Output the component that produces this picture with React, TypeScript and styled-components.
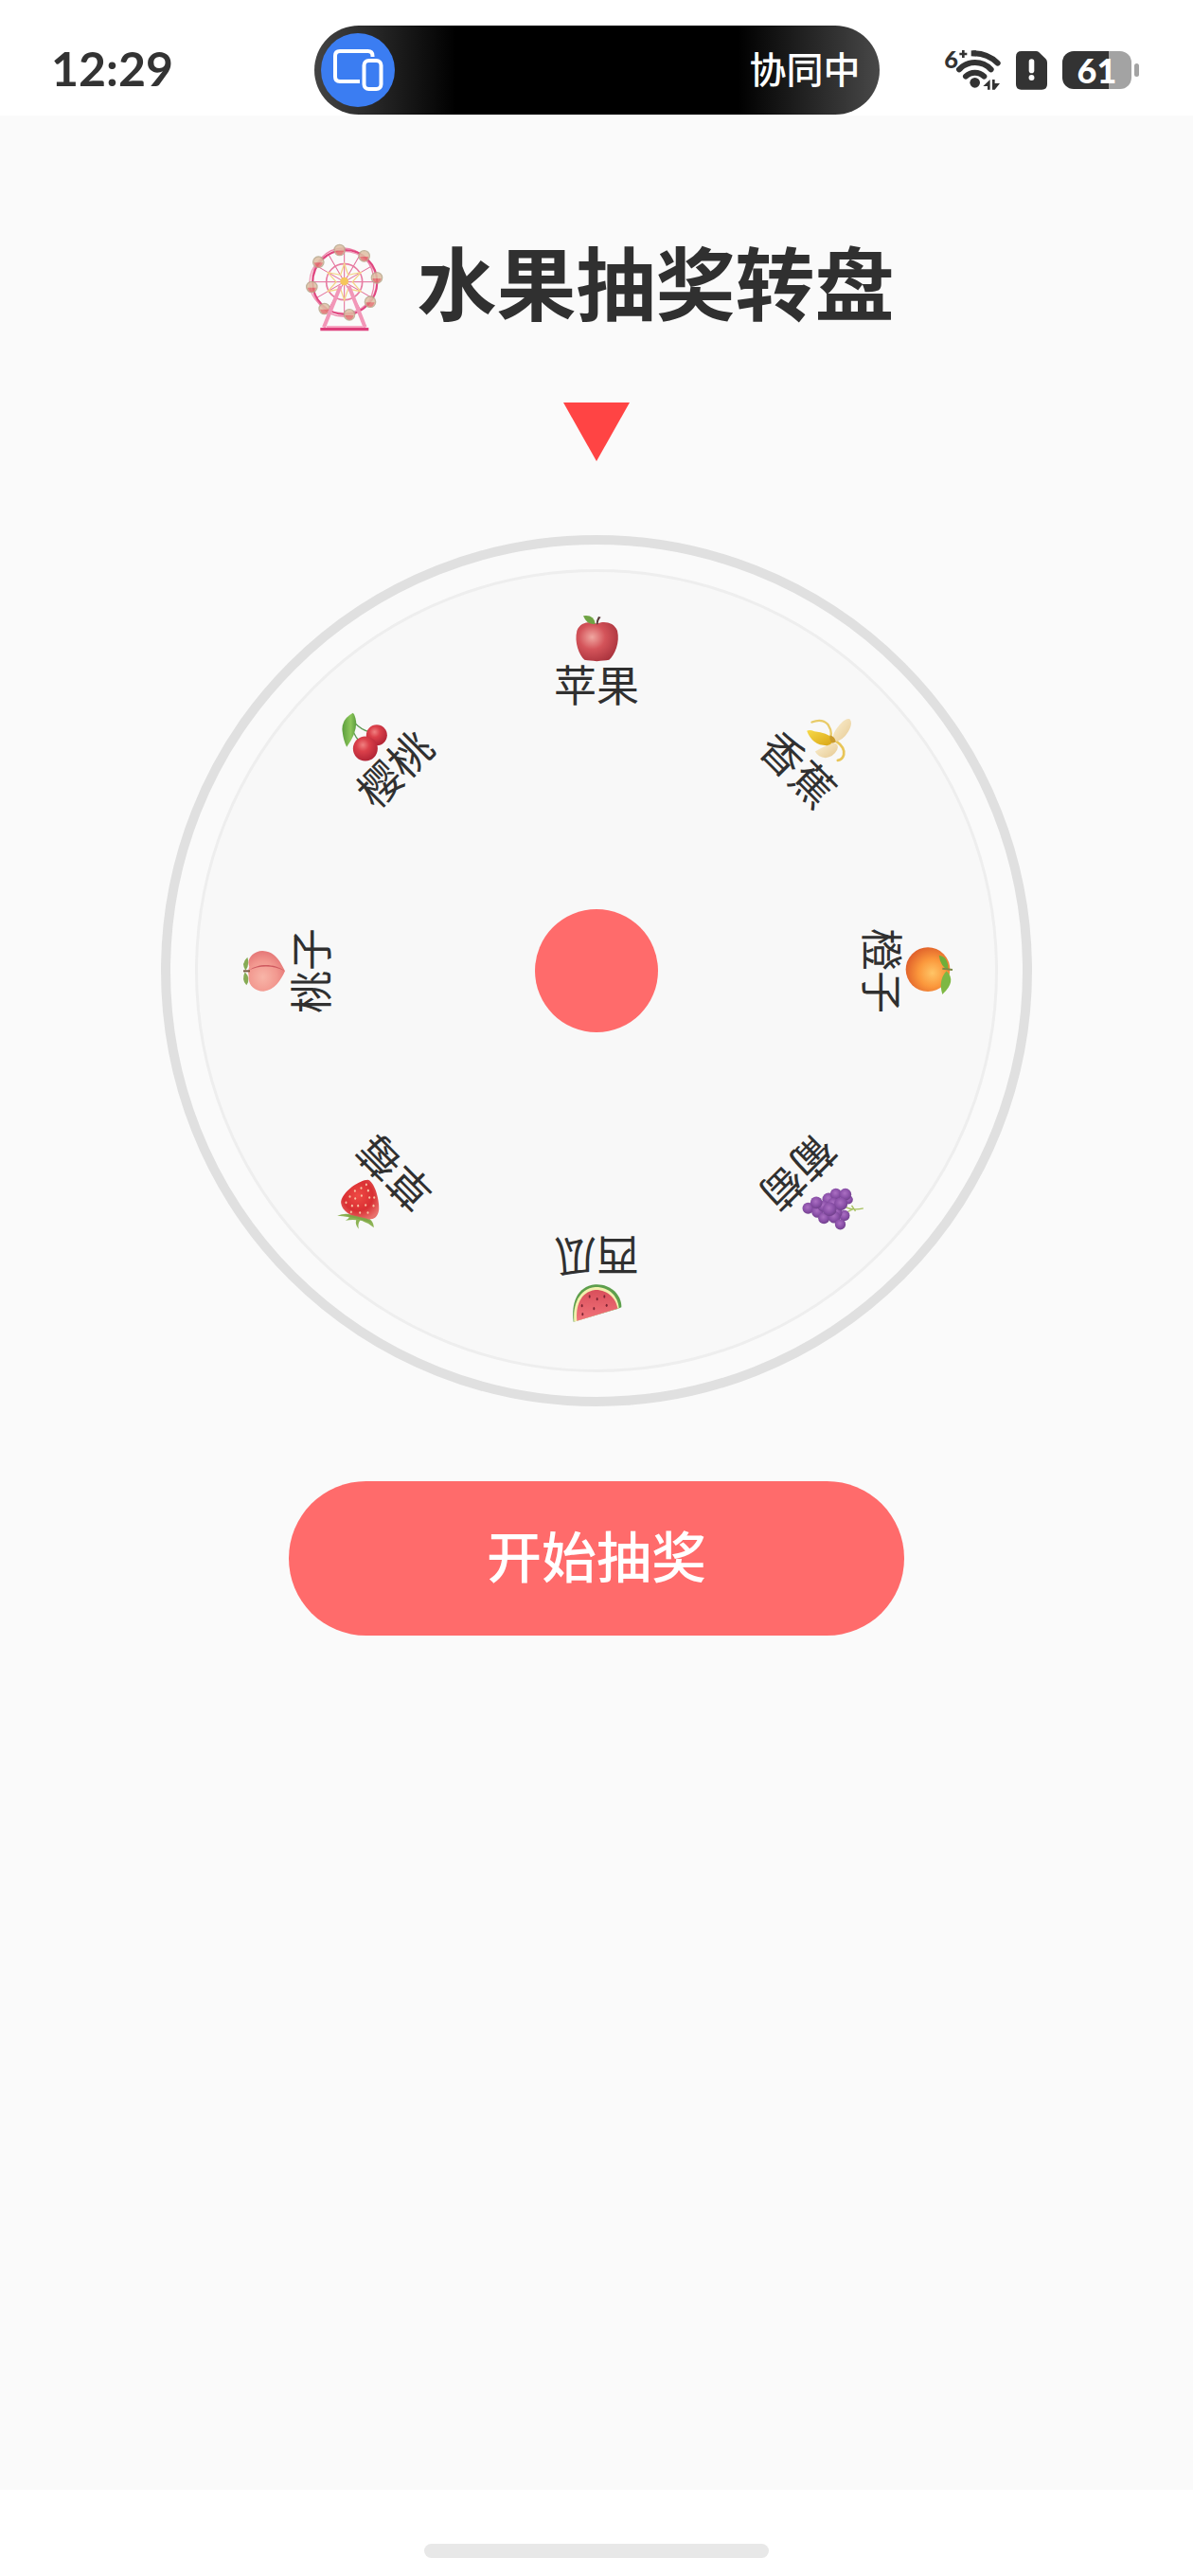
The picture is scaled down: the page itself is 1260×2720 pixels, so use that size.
import { ReactNode, useState } from "react";
import styled, { createGlobalStyle } from "styled-components";

const GlobalStyle = createGlobalStyle`
  * {
    box-sizing: border-box;
  }
  body {
    margin: 0;
    background-color: #fafafa;
    color: #303030;
    font-family: "Noto Sans CJK SC", sans-serif;
  }
`;

const Page = styled.div`
  min-height: 100vh;
  display: flex;
  flex-direction: column;
`;

const StatusBar = styled.header`
  display: grid;
  grid-template-columns: 1fr auto 1fr;
  align-items: center;
  height: 122px;
  padding: 26px 54px 0;
  background-color: #ffffff;
`;

const Clock = styled.time`
  padding-bottom: 4px;
  font-family: Lato, sans-serif;
  font-size: 50px;
  font-weight: 700;
  line-height: 60px;
  color: #333333;
`;

const Island = styled.div`
  display: flex;
  align-items: center;
  justify-content: space-between;
  width: 597px;
  height: 94px;
  padding: 0 20px 0 7px;
  border-radius: 47px;
  background: linear-gradient(
    90deg,
    #444444 0%,
    #000000 25%,
    #000000 75%,
    #484848 100%
  );
`;

const IslandLabel = styled.span`
  padding-bottom: 6px;
  color: #ffffff;
  font-size: 39px;
  font-weight: 500;
  line-height: 48px;
`;

const DeviceBadge = styled.span`
  width: 78px;
  height: 78px;
  border-radius: 50%;
  background-color: #3b7df2;
  svg {
    display: block;
  }
`;

const StatusIcons = styled.div`
  display: flex;
  align-items: center;
  justify-content: flex-end;
  gap: 16px;
  padding-right: 3px;
  svg {
    display: block;
  }
`;

const Battery = styled.div`
  display: flex;
  align-items: center;
  gap: 3px;
  &::after {
    content: "";
    width: 5px;
    height: 14px;
    border-radius: 3px;
    background-color: #a3a3a3;
  }
`;

const BatteryBody = styled.span<{ $level: number }>`
  width: 73px;
  height: 40px;
  border-radius: 12px;
  background: linear-gradient(
    90deg,
    #333333 ${(props) => props.$level}%,
    #a3a3a3 ${(props) => props.$level}%
  );
  color: #ffffff;
  font-family: Lato, sans-serif;
  font-size: 36px;
  font-weight: 900;
  line-height: 40px;
  text-align: center;
`;

const Main = styled.main`
  flex: 1;
  display: flex;
  flex-direction: column;
  align-items: center;
  padding-top: 131px;
`;

const Title = styled.h1`
  display: flex;
  align-items: flex-start;
  gap: 27px;
  margin: 0 0 74px;
  font-size: 84px;
  font-weight: 700;
  line-height: 86px;
`;

const Pointer = styled.div`
  width: 70px;
  height: 62px;
  margin-bottom: 78px;
  background-color: #ff4444;
  clip-path: polygon(0 0, 100% 0, 50% 100%);
`;

const Wheel = styled.div`
  display: flex;
  align-items: center;
  justify-content: center;
  width: 920px;
  height: 920px;
  margin-bottom: 79px;
  border: 10px solid #e0e0e0;
  border-radius: 50%;
`;

const Disc = styled.div<{ $turn: number }>`
  position: relative;
  display: flex;
  align-items: center;
  justify-content: center;
  width: 848px;
  height: 848px;
  border: 3px solid #eeeeee;
  border-radius: 50%;
  background-color: #f8f8f8;
  transform: rotate(${(props) => props.$turn}deg);
  transition: transform 3s ease-out;
`;

const Slot = styled.div<{ $angle: number }>`
  position: absolute;
  inset: 0;
  display: flex;
  flex-direction: column;
  align-items: center;
  padding-top: 43px;
  transform: rotate(${(props) => props.$angle}deg);
  pointer-events: none;
`;

const FruitIcon = styled.svg`
  display: block;
  width: 56px;
  height: 56px;
  flex: none;
  overflow: visible;
`;

const FruitName = styled.span`
  font-size: 45px;
  line-height: 38px;
`;

const Hub = styled.div`
  width: 130px;
  height: 130px;
  border-radius: 50%;
  background-color: #ff6b6b;
`;

const StartButton = styled.button`
  width: 650px;
  max-width: 90%;
  height: 163px;
  padding: 0 0 10px;
  border: none;
  border-radius: 82px;
  background-color: #ff6b6b;
  color: #ffffff;
  font-family: inherit;
  font-size: 58px;
  font-weight: 500;
  cursor: pointer;
`;

const HomeBar = styled.footer`
  display: flex;
  justify-content: center;
  height: 91px;
  padding-top: 57px;
  background-color: #ffffff;
  &::after {
    content: "";
    width: 364px;
    height: 15px;
    border-radius: 8px;
    background-color: #e8e8e8;
  }
`;

interface IFruit {
  name: string;
  // centre of the drawing, in its own units
  cx: number;
  cy: number;
  art: ReactNode;
}

const grapes = [
  [285, 288, 20],
  [308, 272, 18],
  [348, 290, 14],
  [220, 317, 18],
  [250, 328, 19],
  [300, 302, 18],
  [268, 310, 18],
  [335, 340, 17],
  [338, 273, 19],
  [246, 299, 19],
  [270, 348, 18],
  [310, 330, 18],
  [324, 303, 21],
  [303, 345, 19],
  [288, 320, 22],
  [322, 368, 17],
];

const strawberrySeeds = [
  [140, 242], [124, 253], [146, 261], [104, 262], [125, 277], [150, 283],
  [88, 280], [105, 286], [165, 283], [76, 299], [95, 309], [114, 309],
  [138, 307], [163, 309], [120, 331], [145, 331], [92, 329],
];

const melonSeeds = [
  [848, 597], [872, 605], [895, 597], [824, 626], [902, 625], [862, 635],
  [826, 653],
];

const fruits: IFruit[] = [
  {
    name: "苹果",
    cx: 210,
    cy: 375,
    art: (
      <>
        <radialGradient id="apple" cx="38%" cy="38%" r="70%">
          <stop offset="0" stopColor="#f0a7a1" />
          <stop offset="0.45" stopColor="#d4545a" />
          <stop offset="1" stopColor="#a8323c" />
        </radialGradient>
        <path
          d="M211 326C192 316 158 320 148 348C139 385 155 425 172 440C184 443 196 441 211 445C227 441 238 443 250 440C268 425 285 385 276 348C265 320 232 316 211 326Z"
          fill="url(#apple)"
        />
        <path d="M209 328Q209 314 216 303L224 305Q214 316 215 328Z" fill="#5b3b3c" />
        <path d="M168 301Q202 296 206 326Q180 331 168 301Z" fill="#6fa344" />
      </>
    ),
  },
  {
    name: "香蕉",
    cx: 292,
    cy: 142,
    art: (
      <>
        <linearGradient id="peel" x1="0" y1="0" x2="1" y2="1">
          <stop offset="0" stopColor="#f7da4a" />
          <stop offset="1" stopColor="#d9a514" />
        </linearGradient>
        <linearGradient id="flesh" x1="0" y1="0" x2="1" y2="1">
          <stop offset="0" stopColor="#fbf0d2" />
          <stop offset="1" stopColor="#e6c992" />
        </linearGradient>
        <path d="M232 97Q266 84 284 106Q298 128 290 148" fill="none" stroke="#e8cb68" strokeWidth="7" strokeLinecap="round" />
        <path d="M310 158Q338 178 333 200Q329 216 314 218" fill="none" stroke="#e8c558" strokeWidth="8" strokeLinecap="round" />
        <path d="M304 160Q291 142 312 115Q335 84 352 87Q363 100 347 128Q330 156 304 160Z" fill="url(#flesh)" />
        <path d="M242 190Q262 177 300 162Q320 165 312 185Q300 208 275 210Q252 208 242 190Z" fill="url(#flesh)" />
        <path d="M216 125Q224 119 240 126Q280 130 298 148Q300 168 280 171Q234 172 216 125Z" fill="url(#peel)" />
        <path d="M290 138Q306 144 308 160L296 164Q286 154 290 138Z" fill="#c99a2c" />
      </>
    ),
  },
  {
    name: "橙子",
    cx: 300,
    cy: 195,
    art: (
      <>
        <radialGradient id="orange" cx="60%" cy="58%" r="62%">
          <stop offset="0" stopColor="#ffc566" />
          <stop offset="0.5" stopColor="#fb983c" />
          <stop offset="1" stopColor="#e0602a" />
        </radialGradient>
        <circle cx="300" cy="191" r="70" fill="url(#orange)" />
        <path d="M335 146Q366 150 364 192Q340 182 335 146Z" fill="#6fae3a" />
        <path d="M359 196Q392 228 346 270Q332 226 359 196Z" fill="#7db843" />
        <path d="M346 188L378 192" stroke="#7d8a46" strokeWidth="6" />
      </>
    ),
  },
  {
    name: "葡萄",
    cx: 292,
    cy: 307,
    art: (
      <>
        <radialGradient id="grape" cx="45%" cy="40%" r="62%">
          <stop offset="0" stopColor="#ab6fc2" />
          <stop offset="0.6" stopColor="#8a50a8" />
          <stop offset="1" stopColor="#6f3f8a" />
        </radialGradient>
        <path d="M340 314Q365 325 395 317M345 328L362 320M358 308L370 326" fill="none" stroke="#a5c05c" strokeWidth="4" />
        {grapes.map(([x, y, r]) => (
          <circle key={`${x}-${y}`} cx={x} cy={y} r={r} fill="url(#grape)" />
        ))}
      </>
    ),
  },
  {
    name: "西瓜",
    cx: 870,
    cy: 615,
    art: (
      <>
        <linearGradient id="melon" x1="0" y1="0" x2="0" y2="1">
          <stop offset="0" stopColor="#d94f5b" />
          <stop offset="1" stopColor="#f2747b" />
        </linearGradient>
        <path d="M797 677C790 620 806 566 866 559C912 556 950 590 949 631L937 636Z" fill="#5d9f4c" />
        <path d="M799 677C794 624 814 572 866 567C910 566 938 596 941 634Z" fill="#f2efae" />
        <path d="M808 674C803 630 818 582 866 576C906 575 932 604 937 635Z" fill="url(#melon)" />
        {melonSeeds.map(([x, y]) => (
          <ellipse key={`${x}-${y}`} cx={x} cy={y} rx="3" ry="5" fill="#7c2433" />
        ))}
      </>
    ),
  },
  {
    name: "草莓",
    cx: 127,
    cy: 307,
    art: (
      <>
        <radialGradient id="strawberry" cx="45%" cy="40%" r="65%">
          <stop offset="0" stopColor="#ef4a44" />
          <stop offset="0.6" stopColor="#d92f33" />
          <stop offset="1" stopColor="#e8706c" />
        </radialGradient>
        <path d="M48 341Q72 330 96 338Q130 342 150 350Q164 362 164 378Q150 364 134 360Q126 356 120 356Q112 368 116 383Q104 368 108 354Q92 352 74 356Q84 350 86 345Q66 342 48 341Z" fill="#8db355" />
        <path d="M145 227C162 230 182 280 180 322C176 350 160 355 130 350C90 345 58 322 60 295C68 262 118 228 145 227Z" fill="url(#strawberry)" />
        {strawberrySeeds.map(([x, y]) => (
          <ellipse key={`${x}-${y}`} cx={x} cy={y} rx="3" ry="4" fill="#f7c3a4" />
        ))}
        <path d="M70 336Q100 338 142 350L158 362Q130 356 112 350Q90 348 70 336Z" fill="#7fa648" />
      </>
    ),
  },
  {
    name: "桃子",
    cx: 120,
    cy: 885,
    art: (
      <>
        <radialGradient id="peach" cx="40%" cy="65%" r="65%">
          <stop offset="0" stopColor="#f8b5a8" />
          <stop offset="0.6" stopColor="#f2988f" />
          <stop offset="1" stopColor="#e57777" />
        </radialGradient>
        <path d="M64 842Q42 862 58 884Q72 866 64 842Z" fill="#86ab55" />
        <path d="M56 889Q44 915 61 931Q76 910 56 889Z" fill="#86ab55" />
        <path d="M183 886C165 850 150 824 112 822C80 823 60 850 70 872Q64 886 68 900C64 928 85 950 115 950C150 948 170 915 183 886Z" fill="url(#peach)" />
        <path d="M70 883C95 862 150 860 182 886C150 867 100 867 70 883Z" fill="#cf5a60" />
        <path d="M51 886H72" stroke="#7a5b42" strokeWidth="6" />
      </>
    ),
  },
  {
    name: "樱桃",
    cx: 427,
    cy: 142,
    art: (
      <>
        <radialGradient id="cherry" cx="40%" cy="35%" r="65%">
          <stop offset="0" stopColor="#f08080" />
          <stop offset="0.4" stopColor="#db404a" />
          <stop offset="1" stopColor="#b32536" />
        </radialGradient>
        <linearGradient id="leaf" x1="0" y1="0" x2="1" y2="0">
          <stop offset="0" stopColor="#5c9e3e" />
          <stop offset="0.6" stopColor="#8cc65a" />
          <stop offset="1" stopColor="#5c9e3e" />
        </linearGradient>
        <path d="M404 100Q425 122 450 128M398 126Q408 148 420 160" fill="none" stroke="#5f9a55" strokeWidth="4" />
        <circle cx="473" cy="138" r="33" fill="url(#cherry)" />
        <circle cx="437" cy="181" r="39" fill="url(#cherry)" />
        <path d="M398 68Q361 88 364 124Q368 158 378 176Q410 132 408 96Q405 76 398 68Z" fill="url(#leaf)" />
      </>
    ),
  },
];

const STEP = 360 / fruits.length;

const cabins = [
  [149, 69],
  [227, 88],
  [267, 157],
  [246, 233],
  [180, 274],
  [101, 255],
  [61, 186],
  [82, 107],
];

const spokes = [0, 30, 60, 90, 120, 150];

function FerrisWheel() {
  return (
    <svg width="98" height="98" viewBox="18 36 294 294" aria-hidden="true">
      <g fill="none" stroke="#e26a97">
        {spokes.map((angle) => (
          <path
            key={angle}
            d="M62 170H266"
            strokeWidth="3"
            transform={`rotate(${angle} 164 170)`}
          />
        ))}
        <ellipse cx="160" cy="171" rx="106" ry="98" strokeWidth="4" stroke="#f09bb8" />
        <ellipse cx="160" cy="171" rx="98" ry="108" strokeWidth="4" stroke="#ec86aa" />
        <circle cx="166" cy="171" r="102" strokeWidth="6" stroke="#e0457f" />
        <circle cx="164" cy="170" r="57" strokeWidth="5" stroke="#e87ca2" />
      </g>
      <path
        d="M164 112L176 148L216 140L190 170L216 200L176 192L164 228L152 192L112 200L138 170L112 140L152 148Z"
        fill="none"
        stroke="#f5d489"
        strokeWidth="4"
      />
      {cabins.map(([x, y]) => (
        <g key={`${x}-${y}`} opacity="0.85">
          <circle cx={x} cy={y} r="17" fill="#dfc0a4" stroke="#b9a88c" strokeWidth="4" />
          <path d={`M${x - 14} ${y + 2}H${x + 14}Q${x + 10} ${y + 16} ${x} ${y + 16}Q${x - 10} ${y + 16} ${x - 14} ${y + 2}Z`} fill="#e2706f" />
        </g>
      ))}
      <path d="M152 182L99 314M178 182L230 314" stroke="#f297b8" strokeWidth="12" />
      <path d="M108 313H222" stroke="#f7a9c4" strokeWidth="8" />
      <path d="M88 320H241" stroke="#dd3f7b" strokeWidth="10" />
      <circle cx="164" cy="168" r="13" fill="#f6c65c" />
    </svg>
  );
}

function WifiIcon() {
  return (
    <svg width="60" height="60" viewBox="48 46 180 180" aria-hidden="true">
      <g fill="none" stroke="#333333" strokeWidth="18" strokeLinecap="round">
        <path d="M96 134C124 105 169 105 197 134" />
        <path d="M117 156C133 140 159 140 175 156" />
        <path d="M144 83Q187 84 218 114" />
      </g>
      <path d="M134 74H150V92H134Z" fill="#333333" />
      <circle cx="146" cy="176" r="16" fill="#333333" />
      <path d="M194 166V198H186V187H172Z" fill="#333333" />
      <path d="M201 166H209V178H225L209 198H201Z" fill="#333333" />
      <path d="M97 85H121M109 73V97" stroke="#333333" strokeWidth="8" />
      <text x="49" y="129" fill="#333333" fontFamily="Lato, sans-serif" fontWeight="900" fontSize="76">
        6
      </text>
    </svg>
  );
}

function SimAlertIcon() {
  return (
    <svg width="33" height="41" viewBox="276 72 100 124" aria-hidden="true">
      <path
        d="M294 72H340Q346 72 350 76L371 96Q376 101 376 108V178Q376 195 359 195H293Q276 195 276 178V90Q276 72 294 72Z"
        fill="#333333"
      />
      <path d="M326 105V134" stroke="#ffffff" strokeWidth="17" strokeLinecap="round" />
      <circle cx="326" cy="157" r="9" fill="#ffffff" />
    </svg>
  );
}

function DevicesIcon() {
  return (
    <svg width="78" height="78" viewBox="0 0 78 78" aria-hidden="true">
      <g fill="none" stroke="#ffffff" strokeWidth="4">
        <path d="M54.5 25V24Q54.5 19 49.5 19H20Q15 19 15 24V46Q15 51 20 51H41" />
        <rect x="45.5" y="29" width="18" height="30" rx="5" />
      </g>
    </svg>
  );
}

function App() {
  const [turn, setTurn] = useState(0);

  const spin = () => {
    const slot = Math.floor(Math.random() * fruits.length);
    setTurn((prev) => prev + 1440 + slot * STEP);
  };

  return (
    <>
      <GlobalStyle />
      <Page>
        <StatusBar>
          <Clock>12:29</Clock>
          <Island>
            <DeviceBadge>
              <DevicesIcon />
            </DeviceBadge>
            <IslandLabel>协同中</IslandLabel>
          </Island>
          <StatusIcons>
            <WifiIcon />
            <SimAlertIcon />
            <Battery>
              <BatteryBody $level={67}>61</BatteryBody>
            </Battery>
          </StatusIcons>
        </StatusBar>
        <Main>
          <Title>
            <FerrisWheel />
            水果抽奖转盘
          </Title>
          <Pointer />
          <Wheel>
            <Disc $turn={turn}>
              {fruits.map((fruit, index) => (
                <Slot key={fruit.name} $angle={index * STEP}>
                  <FruitIcon
                    viewBox={`${fruit.cx - 84} ${fruit.cy - 84} 168 168`}
                    aria-hidden="true"
                  >
                    <g transform={`rotate(${-index * STEP} ${fruit.cx} ${fruit.cy})`}>
                      {fruit.art}
                    </g>
                  </FruitIcon>
                  <FruitName>{fruit.name}</FruitName>
                </Slot>
              ))}
              <Hub />
            </Disc>
          </Wheel>
          <StartButton onClick={spin}>开始抽奖</StartButton>
        </Main>
        <HomeBar />
      </Page>
    </>
  );
}

export default App;
